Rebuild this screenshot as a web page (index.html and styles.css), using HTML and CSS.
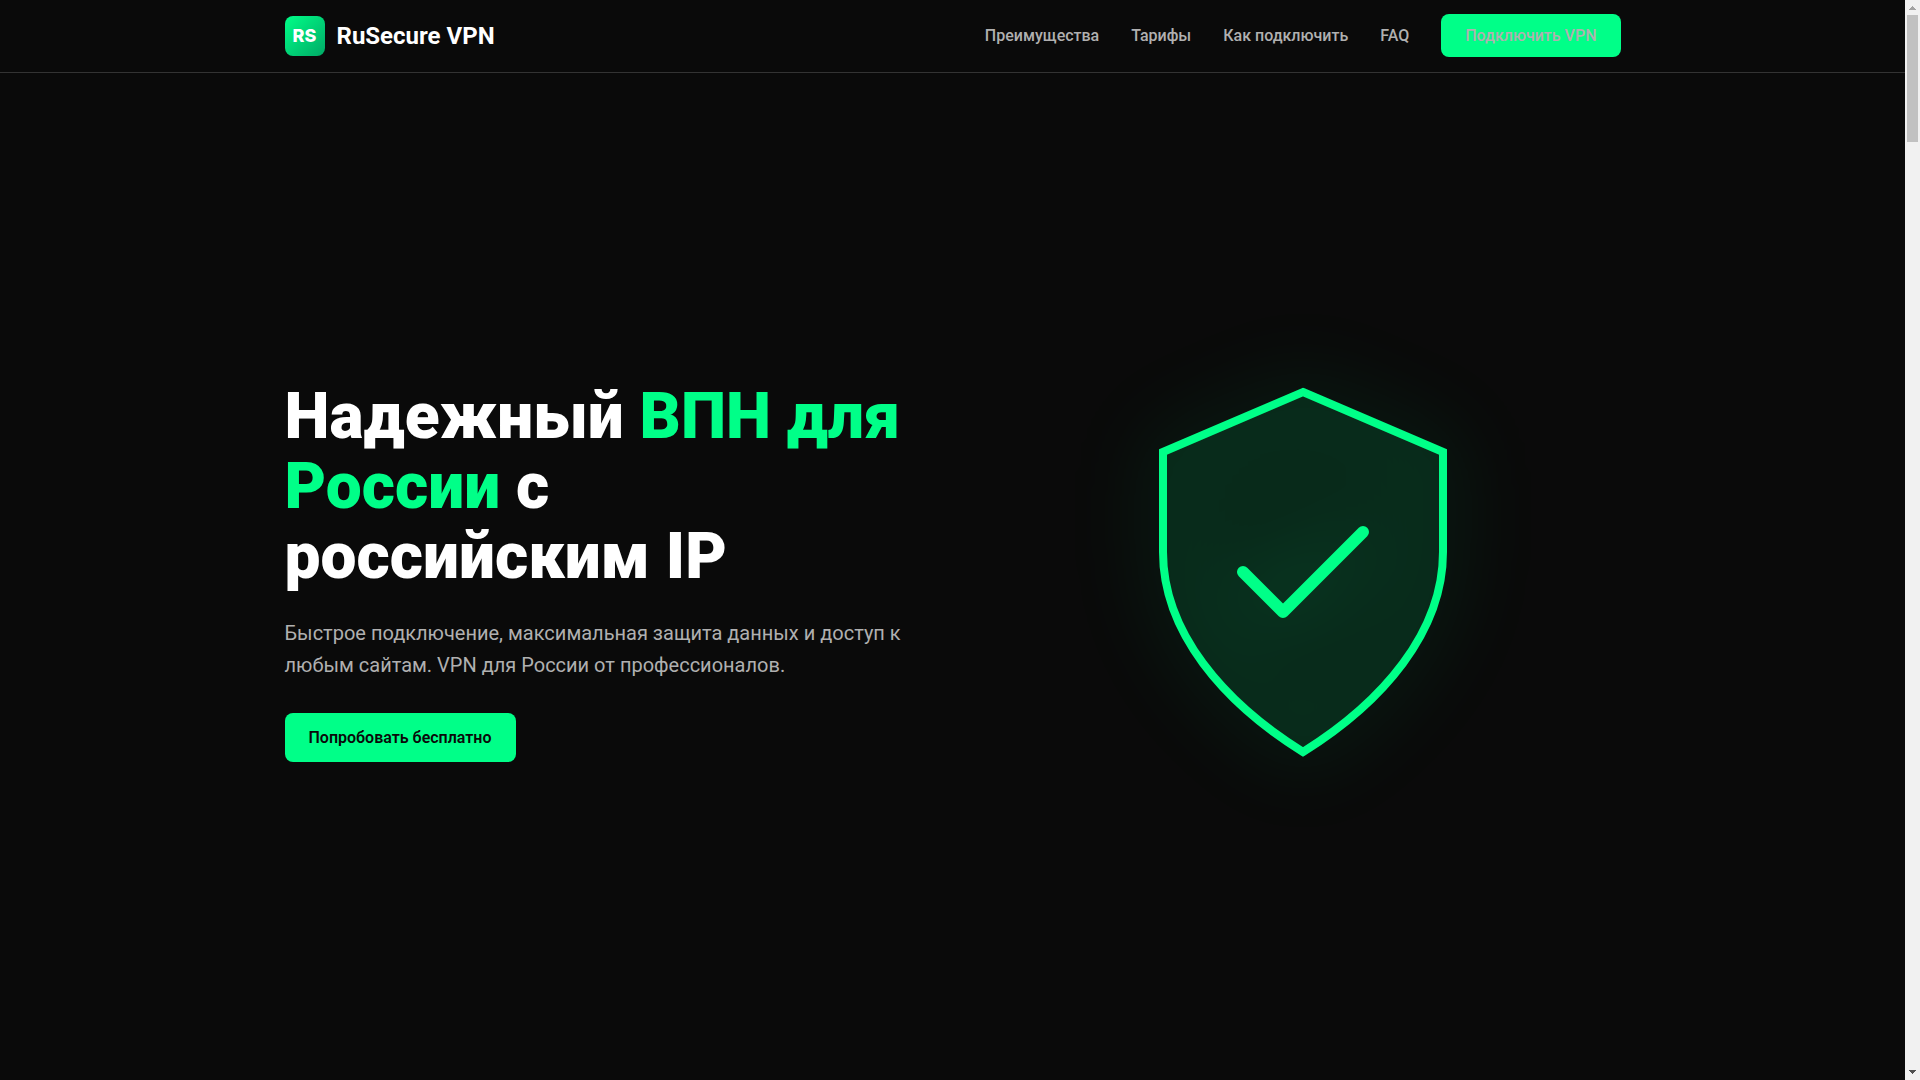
FILE: index.html
```html
<!DOCTYPE html>
<html lang="ru">
<head>
<meta charset="utf-8">
<meta name="viewport" content="width=device-width, initial-scale=1">
<title>RuSecure VPN</title>
<link rel="stylesheet" href="styles.css">
</head>
<body>
<div class="page">
  <header class="header">
    <div class="container header-inner">
      <a class="logo" href="#"><span class="logo-mark">RS</span><span>RuSecure VPN</span></a>
      <nav class="nav">
        <a href="#features">Преимущества</a>
        <a href="#pricing">Тарифы</a>
        <a href="#connect">Как подключить</a>
        <a href="#faq">FAQ</a>
        <a class="nav-cta" href="#pricing">Подключить VPN</a>
      </nav>
    </div>
  </header>
  <main class="hero">
    <div class="container hero-grid">
      <div class="hero-text">
        <h1>Надежный <span class="accent">ВПН для России</span> с российским IP</h1>
        <p>Быстрое подключение, максимальная защита данных и доступ к любым сайтам. VPN для России от профессионалов.</p>
        <button class="btn" type="button">Попробовать бесплатно</button>
      </div>
      <svg class="shield" viewBox="0 0 200 220" aria-hidden="true">
        <path d="M100 20 L170 50 V100 C170 140 140 175 100 200 C60 175 30 140 30 100 V50 Z" fill="#00ff88" fill-opacity="0.1" stroke="#00ff88" stroke-width="4"/>
        <path d="M70 110 L90 130 L130 90" fill="none" stroke="#00ff88" stroke-width="6" stroke-linecap="round" stroke-linejoin="round"/>
      </svg>
    </div>
  </main>
</div>
<div class="scrollbar" aria-hidden="true">
  <svg class="arrow arrow-up" viewBox="0 0 7 4" shape-rendering="crispEdges"><path d="M3 0h1v1h1v1h1v1h1v1H0V3h1V2h1V1h1z"/></svg>
  <div class="thumb"></div>
  <svg class="arrow arrow-down" viewBox="0 0 7 4" shape-rendering="crispEdges"><path d="M0 0h7v1H6v1H5v1H4v1H3V3H2V2H1V1H0z"/></svg>
</div>
</body>
</html>
```
FILE: styles.css
```css
* { box-sizing: border-box; margin: 0; padding: 0; }

body {
  display: grid;
  grid-template-columns: 1fr 15px;
  min-height: 100vh;
  background: #0a0a0a;
  color: #fff;
  font-family: Roboto, sans-serif;
  font-size: 16px;
  line-height: 25px;
}

a { color: inherit; text-decoration: none; }

.page { display: flex; flex-direction: column; }

.container {
  width: 100%;
  max-width: 1400px;
  margin: 0 auto;
  padding: 0 32px;
}

.header {
  padding-bottom: 1px;
  border-bottom: 1px solid #333;
}

.header-inner {
  display: flex;
  align-items: center;
  justify-content: space-between;
  height: 71px;
}

.logo {
  display: flex;
  align-items: center;
  gap: 12px;
  font-size: 24px;
  font-weight: 700;
  line-height: 26px;
}

.logo-mark {
  display: grid;
  place-items: center;
  width: 40px;
  height: 40px;
  border-radius: 8px;
  background: linear-gradient(135deg, #00ff88, #00aa66);
  font-family: Inter, sans-serif;
  font-size: 18px;
  font-weight: 800;
}

.nav {
  display: flex;
  align-items: center;
  gap: 32px;
  color: #b0b0b0;
  font-weight: 500;
}

.nav-cta {
  padding: 12px 24px;
  border-radius: 8px;
  background: #00ff88;
  line-height: 19px;
}

.hero {
  display: flex;
  flex: 1;
  align-items: center;
  padding-bottom: 10px;
}

.hero-grid {
  display: grid;
  grid-template-columns: 1fr 1fr;
  gap: 64px;
  align-items: center;
}

h1 {
  margin-bottom: 25px;
  font-size: 64px;
  font-weight: 900;
  line-height: 70px;
}

.accent { color: #00ff88; }

.hero-text p {
  margin-bottom: 32px;
  color: #b0b0b0;
  font-size: 20px;
  line-height: 32px;
}

.btn {
  display: block;
  padding: 12px 24px;
  border: 0;
  border-radius: 8px;
  background: #00ff88;
  color: #0a0a0a;
  font: inherit;
  font-weight: 600;
}

.shield {
  width: 100%;
  max-width: 400px;
  justify-self: center;
  overflow: visible;
  filter: drop-shadow(0 0 40px rgba(0, 255, 136, 0.3));
}

.scrollbar {
  display: flex;
  flex-direction: column;
  align-items: center;
  background: #f1f1f1;
}

.arrow { width: 7px; height: 4px; }
.arrow-up { margin: 6px 0 5px; fill: #a3a3a3; }
.arrow-down { margin: auto 0 6px; fill: #505050; }

.thumb {
  width: 11px;
  height: 127px;
  background: #c1c1c1;
}
```
